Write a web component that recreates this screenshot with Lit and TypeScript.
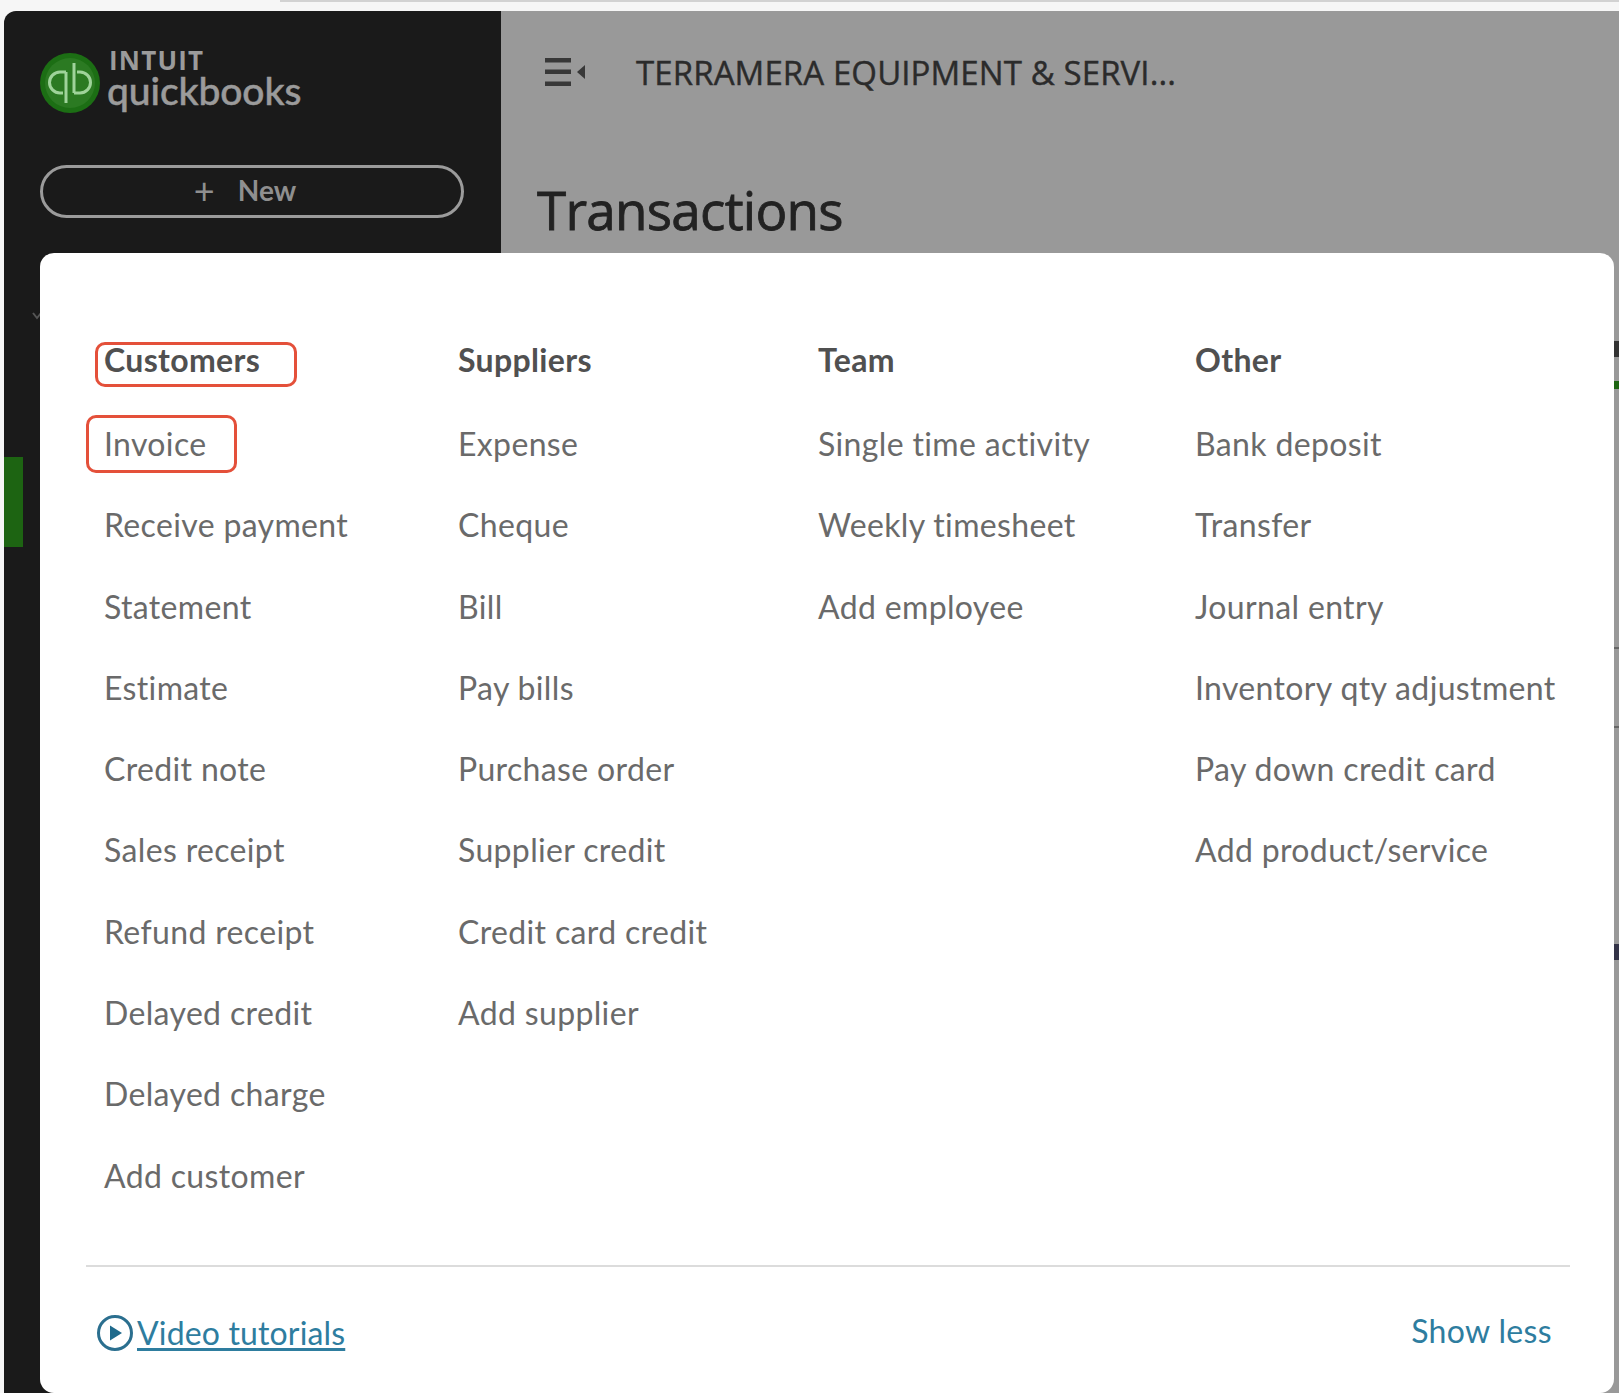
import { LitElement, html, css } from "lit";
import { customElement } from "lit/decorators.js";

const columns = [
  {
    title: "Customers",
    items: ["Invoice", "Receive payment", "Statement", "Estimate", "Credit note", "Sales receipt", "Refund receipt", "Delayed credit", "Delayed charge", "Add customer"],
  },
  {
    title: "Suppliers",
    items: ["Expense", "Cheque", "Bill", "Pay bills", "Purchase order", "Supplier credit", "Credit card credit", "Add supplier"],
  },
  {
    title: "Team",
    items: ["Single time activity", "Weekly timesheet", "Add employee"],
  },
  {
    title: "Other",
    items: ["Bank deposit", "Transfer", "Journal entry", "Inventory qty adjustment", "Pay down credit card", "Add product/service"],
  },
];

// bits of the page underneath that peek out right of the menu
const tails = [
  { top: 341, height: 16, color: "#333333" },
  { top: 381, height: 8, color: "#1d6412" },
  { top: 647, height: 2, color: "#666666" },
  { top: 726, height: 2, color: "#666666" },
  { top: 944, height: 16, color: "#333348" },
];

@customElement("app-root")
export class AppRoot extends LitElement {
  static styles = css`
    :host {
      display: block;
      position: relative;
      width: 1619px;
      height: 1393px;
      overflow: hidden;
      background: #f6f6f6;
      font-family: Lato, "Noto Sans", sans-serif;
    }

    .top-strip {
      height: 11px;
      box-sizing: border-box;
      margin-left: 280px;
      border-top: 2px solid #d2d2d2;
    }

    .shell {
      display: flex;
      height: 1382px;
      padding-left: 4px;
    }

    .sidebar {
      width: 497px;
      flex: none;
      box-sizing: border-box;
      background: #1a1a1a;
      border-radius: 12px 0 0 0;
      padding: 39px 0 0 36px;
    }

    .brand {
      display: flex;
      align-items: center;
      gap: 9px;
      height: 66px;
    }

    .brand-text {
      display: flex;
      flex-direction: column;
      color: #9b9b9b;
      margin-top: -7px;
    }

    .intuit {
      font-family: "Open Sans", sans-serif;
      font-size: 26px;
      line-height: 20px;
      font-weight: 700;
      letter-spacing: 1.2px;
    }

    .quickbooks {
      font-size: 39px;
      line-height: 40px;
      font-weight: 500;
      -webkit-text-stroke: 0.5px #9b9b9b;
      letter-spacing: -0.1px;
      margin-left: -2px;
    }

    .new-button {
      display: flex;
      align-items: center;
      justify-content: center;
      gap: 23px;
      box-sizing: border-box;
      width: 424px;
      height: 53px;
      margin-top: 49px;
      padding: 0 14px 3px 0;
      border: 3px solid #9b9b9b;
      border-radius: 27px;
      color: #8f8f8f;
      font-size: 28px;
      font-weight: 700;
    }

    .plus {
      font-size: 36px;
      line-height: 36px;
      font-weight: 400;
    }

    .active-bar {
      position: absolute;
      left: 4px;
      top: 457px;
      width: 19px;
      height: 90px;
      background: #1d6412;
    }

    .chevron {
      position: absolute;
      left: 32px;
      top: 311px;
    }

    .main {
      flex: 1;
      background: #999999;
      padding: 47px 0 0 36px;
      color: #222222;
    }

    .company {
      display: flex;
      align-items: center;
      gap: 49px;
      height: 28px;
      margin-left: 8px;
      font-family: "Open Sans", sans-serif;
      font-size: 33px;
      letter-spacing: 0.1px;
      -webkit-text-stroke: 0.4px #2b2b2b;
      color: #2b2b2b;
    }

    h1 {
      margin: 88px 0 0;
      font-family: "Open Sans", sans-serif;
      font-size: 53px;
      line-height: 72px;
      font-weight: 400;
      letter-spacing: -0.75px;
      -webkit-text-stroke: 0.8px #222222;
      color: #222222;
    }

    .menu {
      position: absolute;
      left: 40px;
      top: 253px;
      width: 1574px;
      height: 1140px;
      box-sizing: border-box;
      background: #ffffff;
      border-radius: 14px;
      padding: 67px 44px 0 46px;
      color: #6a6a6a;
      font-size: 32px;
      letter-spacing: 0.35px;
    }

    .columns {
      display: grid;
      grid-template-columns: 354px 360px 377px 1fr;
      height: 945px;
      padding-left: 18px;
    }

    .heading,
    .item {
      position: relative;
      white-space: nowrap;
    }

    .heading {
      height: 83px;
      line-height: 80px;
      font-weight: 700;
      color: #505050;
    }

    .item {
      height: 81.3px;
      line-height: 81px;
    }

    .mark {
      position: absolute;
      box-sizing: border-box;
      border: 3px solid #e4503a;
      border-radius: 10px;
    }

    .mark-heading {
      left: -9px;
      top: 22px;
      width: 202px;
      height: 45px;
    }

    .mark-item {
      left: -18px;
      top: 12px;
      width: 151px;
      height: 58px;
    }

    .footer {
      display: flex;
      justify-content: space-between;
      align-items: center;
      height: 130px;
      padding: 0 18px 0 10px;
      border-top: 2px solid #dcdcdc;
      color: #2e7d9f;
    }

    .tutorials {
      display: flex;
      align-items: center;
      gap: 3px;
      margin-top: 1px;
      letter-spacing: 0.15px;
      text-decoration: underline;
      text-underline-offset: 3px;
    }

    .show-less {
      margin-top: -4px;
    }

    .tail {
      position: absolute;
      left: 1614px;
      width: 5px;
    }
  `;

  private renderLogo() {
    return html`<svg width="60" height="60" viewBox="0 0 60 60">
      <circle cx="30" cy="30" r="30" fill="#1c6e14"></circle>
      <circle cx="30" cy="30" r="25" fill="#2b7a22"></circle>
      <g fill="none" stroke="#9fd39a" stroke-width="3">
        <path d="M26 19H20a10.500 10.500 0 0 0 0 21h3"></path>
        <path d="M26 19V50"></path>
        <path d="M34 40h6a10.500 10.500 0 0 0 0-21h-3"></path>
        <path d="M34 10V40"></path>
      </g>
    </svg>`;
  }

  private renderHamburger() {
    return html`<svg width="42" height="28" viewBox="0 0 42 28">
      <g fill="#383838">
        <rect x="0" y="0" width="26" height="4.500"></rect>
        <rect x="0" y="11.500" width="26" height="4.500"></rect>
        <rect x="0" y="23.500" width="26" height="4.500"></rect>
        <path d="M40 7V21L32 14Z"></path>
      </g>
    </svg>`;
  }

  private renderPlay() {
    return html`<svg width="38" height="38" viewBox="0 0 38 38">
      <circle cx="19" cy="19" r="16.500" fill="none" stroke="#2b6f8f" stroke-width="3"></circle>
      <path d="M14 11.500V26.500L26 19Z" fill="#1f6a8c"></path>
    </svg>`;
  }

  render() {
    return html`
      <div class="top-strip"></div>
      <div class="shell">
        <aside class="sidebar">
          <div class="brand">
            ${this.renderLogo()}
            <div class="brand-text">
              <span class="intuit">INTUIT</span>
              <span class="quickbooks">quickbooks</span>
            </div>
          </div>
          <div class="new-button"><span class="plus">+</span><span>New</span></div>
        </aside>
        <main class="main">
          <div class="company">
            ${this.renderHamburger()}
            <span>TERRAMERA EQUIPMENT &amp; SERVI...</span>
          </div>
          <h1>Transactions</h1>
        </main>
      </div>
      <div class="active-bar"></div>
      <svg class="chevron" width="10" height="10" viewBox="0 0 10 10">
        <path d="M1 2L5 7L9 2" fill="none" stroke="#555555" stroke-width="2"></path>
      </svg>
      ${tails.map(
        (t) => html`<div
          class="tail"
          style="top:${t.top}px;height:${t.height}px;background:${t.color}"></div>`
      )}
      <section class="menu">
        <div class="columns">
          ${columns.map(
            (col, c) => html`<div>
              <div class="heading">
                ${col.title}${c === 0 ? html`<div class="mark mark-heading"></div>` : ""}
              </div>
              ${col.items.map(
                (item, i) => html`<div class="item">
                  ${item}${c === 0 && i === 0 ? html`<div class="mark mark-item"></div>` : ""}
                </div>`
              )}
            </div>`
          )}
        </div>
        <div class="footer">
          <div class="tutorials">${this.renderPlay()}<span>Video tutorials</span></div>
          <div class="show-less">Show less</div>
        </div>
      </section>
    `;
  }
}
